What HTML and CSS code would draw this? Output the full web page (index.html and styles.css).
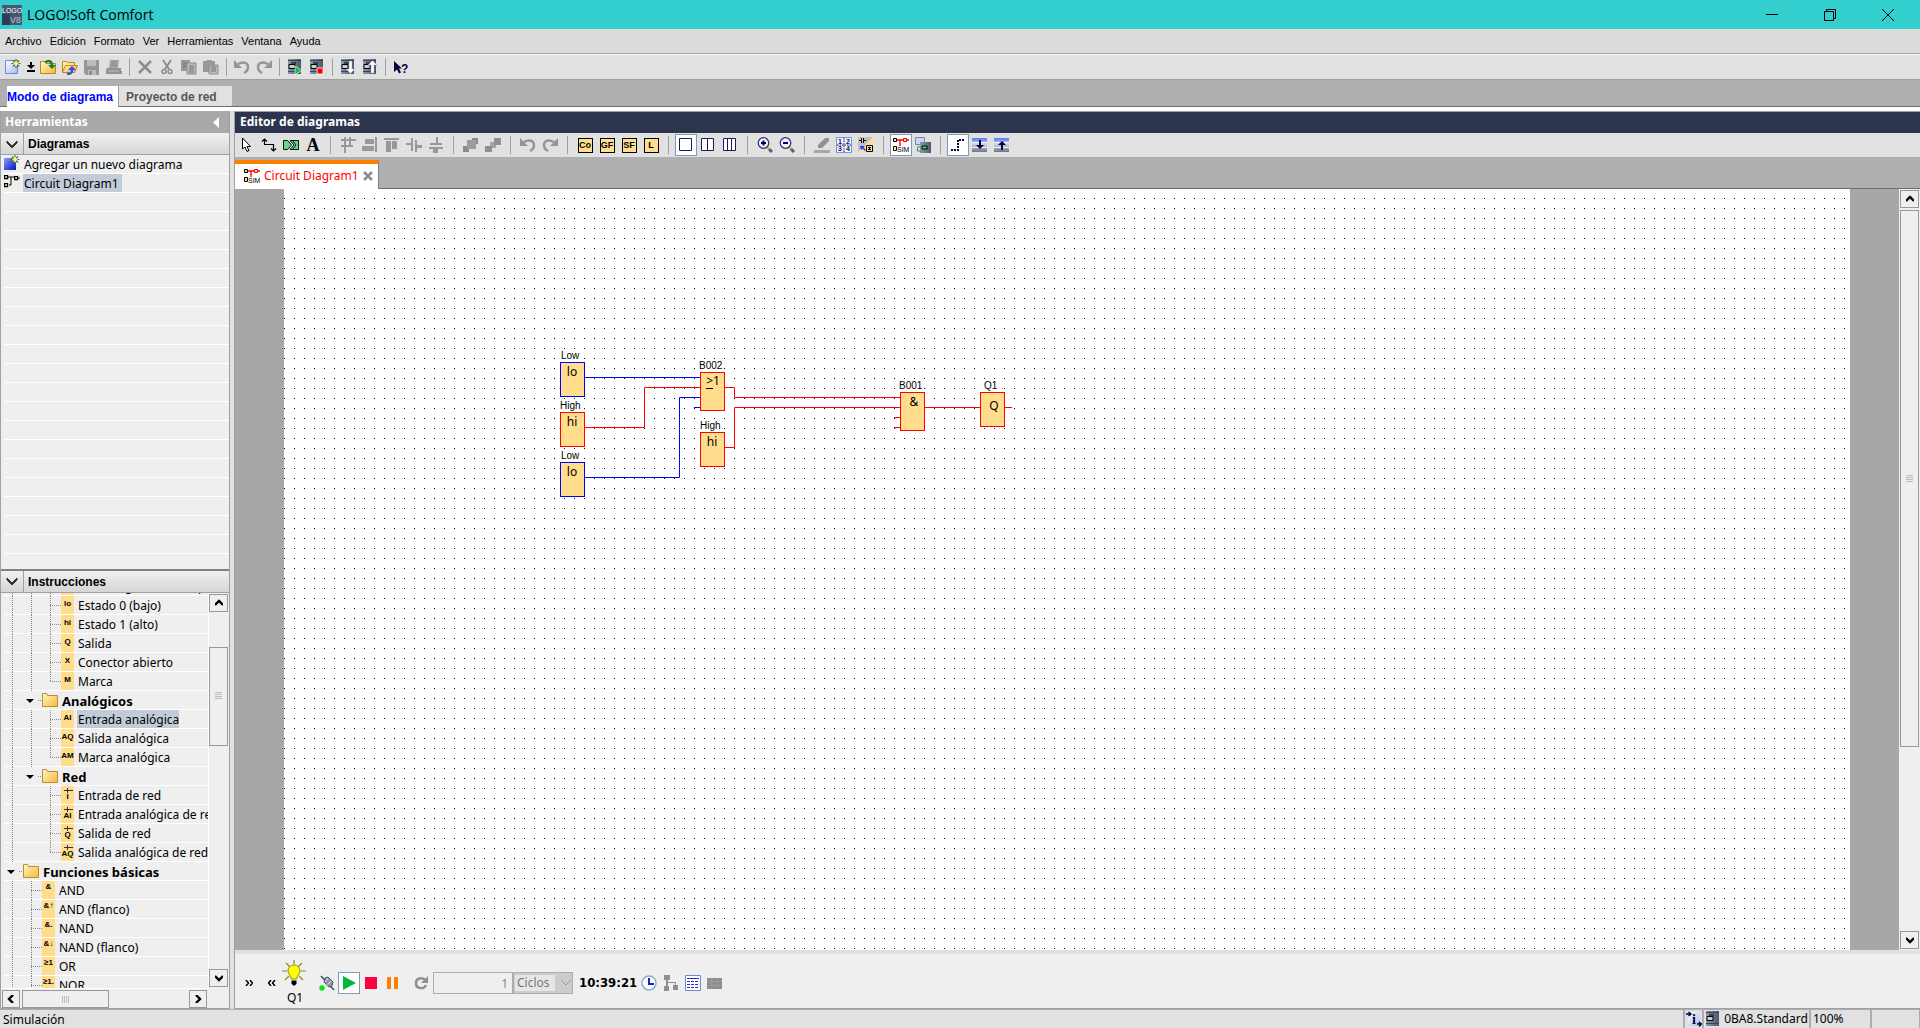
FILE: index.html
```html
<!DOCTYPE html>
<html lang="es">
<head>
<meta charset="utf-8">
<title>LOGO!Soft Comfort</title>
<link rel="stylesheet" href="styles.css">
</head>
<body>
<svg class="sprite" aria-hidden="true">
  <defs>
    <linearGradient id="g-blue" x1="0" y1="0" x2="1" y2="1"><stop offset="0" stop-color="#8a9cff"/><stop offset="1" stop-color="#0a14b8"/></linearGradient>
    <linearGradient id="g-page" x1="0" y1="0" x2="1" y2="1"><stop offset="0" stop-color="#fff"/><stop offset="1" stop-color="#a9b8f0"/></linearGradient>
    <linearGradient id="g-folder" x1="0" y1="0" x2="1" y2="1"><stop offset="0" stop-color="#fff6cc"/><stop offset="1" stop-color="#f5b93a"/></linearGradient>
    <linearGradient id="g-module" x1="0" y1="0" x2="1" y2="0"><stop offset="0" stop-color="#8d99ae"/><stop offset="1" stop-color="#4d586c"/></linearGradient>
    <linearGradient id="g-bar" x1="0" y1="0" x2="0" y2="1"><stop offset="0" stop-color="#5a78f0"/><stop offset=".35" stop-color="#a9bdff"/><stop offset=".4" stop-color="#d5d8e2"/><stop offset="1" stop-color="#6f7686"/></linearGradient>
  </defs>
  <symbol id="i-spark" viewBox="0 0 16 16"><path d="M11 0v9M6.500 4.500h9M8 1.500l6 6M14 1.500l-6 6" stroke="#2f6a78" stroke-width="1.200"/><path d="M11 2v5M8.500 4.500h5" stroke="#ffff3c" stroke-width="2"/></symbol>
  <symbol id="i-new" viewBox="0 0 16 16"><path d="M.5 1.500h12v13H.5z" fill="url(#g-page)" stroke="#6f86d8"/><use href="#i-spark"/></symbol>
  <symbol id="i-newdia" viewBox="0 0 16 16"><path d="M0 3h12v12H0z" fill="url(#g-blue)"/><use href="#i-spark"/></symbol>
  <symbol id="i-drop" viewBox="0 0 8 12"><path d="M3 1h2v3h3L4 8 0 4h3zM0 9h8v2H0z" fill="#000"/></symbol>
  <symbol id="i-open" viewBox="0 0 16 16"><path d="M.5 2.500h5l1 2h9v10H.5z" fill="url(#g-folder)" stroke="#c08a10"/><path d="M5 3.500c4-3 7-1 7 3" stroke="#18803a" stroke-width="2.500" fill="none"/><path d="M8 6h8l-4 4z" fill="#18803a"/></symbol>
  <symbol id="i-openup" viewBox="0 0 16 16"><path d="M.5 2.500h4l1 1h7v3h3l-3 7H.5z" fill="url(#g-folder)" stroke="#c08a10"/><path d="M.5 13l3-6.500h12" fill="none" stroke="#c08a10"/><path d="M5 15c4 0 5-1 5-4" stroke="#2d50f0" stroke-width="2.500" fill="none"/><path d="M6 11l4-4 4 4z" fill="#2d50f0"/></symbol>
  <symbol id="i-save" viewBox="0 0 16 16"><path d="M0 1h15v15H2l-2-2z" fill="#969696"/><path d="M3 1h9v6H3zM4 11h8v5H4z" fill="#bdbdbd"/><path d="M5 12h3v4H5z" fill="#8d8d8d"/></symbol>
  <symbol id="i-print" viewBox="0 0 16 16"><path d="M4 1h9l-1 8H3z" fill="#a6a6a6"/><path d="M5 3h6M5 5h6M5 7h6" stroke="#8b8b8b"/><path d="M1 9h14v3h1v3H0v-4z" fill="#929292"/><path d="M2 12h11" stroke="#bbb"/></symbol>
  <symbol id="i-delete" viewBox="0 0 16 16"><path d="M2 2l12 12M14 2L2 14" stroke="#8d8d8d" stroke-width="2.500"/></symbol>
  <symbol id="i-cut" viewBox="0 0 16 16"><path d="M4 1l6 9M12 1L6 10" stroke="#8d8d8d" stroke-width="2"/><circle cx="5" cy="12.500" r="2" fill="none" stroke="#8d8d8d" stroke-width="1.500"/><circle cx="11" cy="12.500" r="2" fill="none" stroke="#8d8d8d" stroke-width="1.500"/></symbol>
  <symbol id="i-copy" viewBox="0 0 16 16"><path d="M0 1h9v11H0z" fill="#999"/><path d="M6 4h9v11H6z" fill="#b9b9b9" stroke="#8d8d8d"/><path d="M2 4h4M2 6h3M2 8h3M8 7h5M8 9h5M8 11h5M8 13h5" stroke="#777"/></symbol>
  <symbol id="i-paste" viewBox="0 0 16 16"><path d="M0 2h3l1-1h4l1 1h3v11H0z" fill="#999"/><path d="M6 6h9v9H6z" fill="#b9b9b9" stroke="#8d8d8d"/><path d="M8 8h5M8 10h5M8 12h5" stroke="#777"/></symbol>
  <symbol id="i-undo" viewBox="0 0 16 16"><path d="M4 5c6-3 10-1 10 3 0 3-2 5-4 6" fill="none" stroke="#959595" stroke-width="2.500"/><path d="M0 1v8h8z" fill="#959595"/></symbol>
  <symbol id="i-redo" viewBox="0 0 16 16"><path d="M12 5C6 2 2 4 2 8c0 3 2 5 4 6" fill="none" stroke="#959595" stroke-width="2.500"/><path d="M16 1v8H8z" fill="#959595"/></symbol>
  <symbol id="i-module" viewBox="0 0 16 16"><path d="M1 0h13v15H1z" fill="url(#g-module)"/><path d="M1 1h13v1H1zM1 12h13v1H1z" fill="#39435a"/><path d="M2 5.500h6v4H2zM4 4h5" fill="#c7cfde" stroke="#000"/></symbol>
  <symbol id="i-start" viewBox="0 0 16 16"><use href="#i-module"/><path d="M8 7l7 4.500-7 4z" fill="#11c04a" stroke="#fff" stroke-width=".6"/></symbol>
  <symbol id="i-halt" viewBox="0 0 16 16"><use href="#i-module"/><path d="M8 9h6v6H8z" fill="#f00" stroke="#fff" stroke-width=".8"/></symbol>
  <symbol id="i-down" viewBox="0 0 16 16"><use href="#i-module"/><path d="M9 2h3v8h3l-4.500 4.500L6 10h3z" fill="#fff" stroke="#8490a8" stroke-width=".4"/></symbol>
  <symbol id="i-up" viewBox="0 0 16 16"><use href="#i-module"/><path d="M9 14h3V6h3l-4.500-4.500L6 6h3z" fill="#fff" stroke="#8490a8" stroke-width=".4"/></symbol>
  <symbol id="i-help" viewBox="0 0 16 16"><path d="M1 2v11l3-2.500 2 4 2-1-2-4h3z" fill="#06063c"/><text x="8" y="14" font-family="Liberation Sans, sans-serif" font-size="12" font-weight="700" fill="#06063c">?</text></symbol>
  <symbol id="i-circuit" viewBox="0 0 16 16"><path d="M4 3h6M7 3v8M5 11h2M14 4h2" stroke="#000" fill="none"/><path d="M.6 1.600h3v3h-3zM10.600 2.600h3v3h-3zM.6 9.600h3v3h-3z" fill="#ffe08a" stroke="#000" stroke-width="1.200"/></symbol>
  <symbol id="i-arrow" viewBox="0 0 16 16"><path d="M3.500 1v11l2.500-2 2 4.500 2-1-2-4h3.500z" fill="#fff" stroke="#000"/></symbol>
  <symbol id="i-link" viewBox="0 0 16 16"><path d="M3.500 2v5.500h9V14M1 4.500L3.500 2 6 4.500M10 11.500l2.500 2.500 2.500-2.500" fill="none" stroke="#000" stroke-width="1.200"/></symbol>
  <symbol id="i-cutlink" viewBox="0 0 16 16"><path d="M.5 3.500h4L8.500 8l-4 4.500h-4zM7 3.500h8.500v9H7L11 8z" fill="#5edc8a" stroke="#111"/><path d="M9.500 3.500L13 8l-3.500 4.500" fill="none" stroke="#111"/></symbol>
  <symbol id="i-align1" viewBox="0 0 16 16"><path d="M5 0v16M10 0v9M1 3h15M1 9h12" stroke="#999" stroke-width="2"/></symbol>
  <symbol id="i-align2" viewBox="0 0 16 16"><path d="M3 2h9v5H3zM0 9h12v5H0zM13 0h2v15h-2z" fill="#999"/></symbol>
  <symbol id="i-align3" viewBox="0 0 16 16"><path d="M0 1h15v2H0zM2 4h5v11H2zM8 4h5v8H8z" fill="#999"/></symbol>
  <symbol id="i-align4" viewBox="0 0 16 16"><path d="M0 6h5v2H0zM5 1h2v13H5zM9 3h2v12H9zM11 8h5v3h-5z" fill="#999"/></symbol>
  <symbol id="i-align5" viewBox="0 0 16 16"><path d="M8 0h2v6H8zM2 6h12v2H2zM1 10h14v2H1zM5 12h5v4H5z" fill="#999"/></symbol>
  <symbol id="i-stack1" viewBox="0 0 16 16"><path d="M0 9h6v6H0z" fill="#8b8b8b"/><path d="M9 1h6v6H9z" fill="#8b8b8b"/><path d="M4 3h9v9H4z" fill="#9b9b9b"/></symbol>
  <symbol id="i-stack2" viewBox="0 0 16 16"><path d="M5 5h6v6H5z" fill="#a5a5a5"/><path d="M9 1h7v7H9zM0 9h7v6H0z" fill="#8f8f8f"/></symbol>
  <symbol id="i-pane1" viewBox="0 0 16 16"><path d="M1.500 1.500h12v12h-12z" fill="#fff" stroke="#1c1c5c"/></symbol>
  <symbol id="i-pane2" viewBox="0 0 16 16"><path d="M1.500 1.500h12v12h-12zM7.500 1v13" fill="#fff" stroke="#1c1c5c"/></symbol>
  <symbol id="i-pane3" viewBox="0 0 16 16"><path d="M1.500 1.500h12v12h-12zM5.500 1v13M9.500 1v13" fill="#fff" stroke="#1c1c5c"/></symbol>
  <symbol id="i-lens" viewBox="0 0 16 16"><path d="M10 10l2 2" stroke="#e8b53a" stroke-width="3"/><path d="M12 12l3 3" stroke="#55627e" stroke-width="3"/><circle cx="6.500" cy="6" r="5.300" fill="#eef2ff" stroke="#2b2f6c" stroke-width="1.200"/><path d="M4 6h5" stroke="#000060" stroke-width="2"/></symbol>
  <symbol id="i-zoomin" viewBox="0 0 16 16"><use href="#i-lens"/><path d="M6.500 3.500v5" stroke="#000060" stroke-width="2"/></symbol>
  <symbol id="i-erase" viewBox="0 0 16 16"><path d="M0 13h16v3H0z" fill="#a8a8a8"/><path d="M11 1h4v3l-7 7H4V8z" fill="#929292"/></symbol>
  <symbol id="i-num" viewBox="0 0 16 16"><path d="M.5.500h15v15H.5z" fill="#f3f6ff" stroke="#7c92e0"/><path d="M8 1v14M1 8h14" stroke="#101060" stroke-dasharray="1.500 1"/><g font-family="Liberation Sans, sans-serif" font-size="7" font-weight="700" fill="#101060"><text x="2" y="7">1</text><text x="10" y="7">2</text><text x="2" y="14">3</text><text x="10" y="14">4</text></g></symbol>
  <symbol id="i-convert" viewBox="0 0 16 16"><path d="M0 0h15v15H0z" fill="#bfc0c2"/><path d="M15 0v15H0z" fill="#ffdca0"/><path d="M1 3.500h2M3.500 1v5M5.500 1v5M6 3.500h2" stroke="#000"/><path d="M2 9h5L5.500 10.500 8 13l-1 1-2.500-2.500L3 13z" fill="#1b3bff"/><path d="M8.500 8.500h6v6h-6z" fill="#ffe0a0" stroke="#000"/><path d="M10 10.500h3M11.500 10.500v2M10 12.500h3" stroke="#000"/></symbol>
  <symbol id="i-sim" viewBox="0 0 16 16"><path d="M4 3h6M7 3v6M14 3h2" stroke="#f00" stroke-width="1.400"/><path d="M.5 1.500h3v3h-3zM.5 9.500h3v4h-3z" fill="#ffe08a" stroke="#000"/><path d="M10.500 1.500h3v3h-3z" fill="#ffe08a" stroke="#f00"/><text x="4" y="15" font-family="Liberation Sans, sans-serif" font-size="7">SIM</text></symbol>
  <symbol id="i-online" viewBox="0 0 16 16"><path d="M.5.500h9v7h-9z" fill="#c9d6f4" stroke="#7a88a8"/><path d="M2 9h5v2H2z" fill="#98a2b8"/><path d="M5 5h11v11H5z" fill="url(#g-module)"/><path d="M7 9h5v3H7z" fill="#29e060" stroke="#000"/><path d="M2.500 11v3H6" stroke="#15a040" fill="none"/></symbol>
  <symbol id="i-snap" viewBox="0 0 16 16"><path d="M1 13h7V3h7" stroke="#06063c" stroke-width="2" stroke-dasharray="2 1" fill="none"/></symbol>
  <symbol id="i-bardown" viewBox="0 0 16 16"><path d="M0 1h15v14H0z" fill="url(#g-bar)"/><path d="M0 5.500h15M0 10.500h15" stroke="#f3f5fa"/><path d="M8 3v6" stroke="#06063c" stroke-width="2"/><path d="M4 8h8l-4 4z" fill="#06063c"/></symbol>
  <symbol id="i-barup" viewBox="0 0 16 16"><path d="M0 1h15v14H0z" fill="url(#g-bar)"/><path d="M0 5.500h15M0 10.500h15" stroke="#f3f5fa"/><path d="M8 13V7" stroke="#06063c" stroke-width="2"/><path d="M4 8h8L8 4z" fill="#06063c"/></symbol>
  <symbol id="i-folder" viewBox="0 0 16 16"><path d="M.5 1.500h4l1 2h10v11H.5z" fill="url(#g-folder)" stroke="#b8902c"/></symbol>
  <symbol id="i-plug" viewBox="0 0 16 16"><path d="M2 1l13 14" stroke="#44546c" stroke-width="1.500"/><path d="M6 3l3-1 5 5-1 4-3 1-5-5z" fill="#8b98ae" stroke="#44546c"/><path d="M9 3l-3 4M12 6l-4 4" stroke="#fff" stroke-width=".7"/><circle cx="3" cy="13" r="2.700" fill="#00e818"/></symbol>
  <symbol id="i-play" viewBox="0 0 16 16"><path d="M2 1l13 7-13 7z" fill="#00b83c"/></symbol>
  <symbol id="i-stop" viewBox="0 0 16 16"><path d="M2 2h12v12H2z" fill="#ff0040"/></symbol>
  <symbol id="i-pause" viewBox="0 0 16 16"><path d="M2 2h4v12H2zM9 2h4v12H9z" fill="#ff8000"/></symbol>
  <symbol id="i-refresh" viewBox="0 0 16 16"><path d="M13 10c-1 4-10 5-10-2 0-5 6-6 9-3" fill="none" stroke="#8f8f8f" stroke-width="2.500"/><path d="M15 1v7H8z" fill="#8f8f8f"/></symbol>
  <symbol id="i-clock" viewBox="0 0 16 16"><circle cx="8" cy="8" r="7" fill="#fff" stroke="#8fa9d4" stroke-width="1.500"/><path d="M8 3v6h5" stroke="#1020d0" stroke-width="2" fill="none"/></symbol>
  <symbol id="i-net" viewBox="0 0 16 16"><path d="M1 0h6v5H1zM1 11h5v5H1zM10 10h5v5h-5zM3 5h2v6H3zM5 7h8v1H5zM12 7h1v3h-1z" fill="#8f8f8f"/></symbol>
  <symbol id="i-table" viewBox="0 0 16 16"><path d="M.5.500h15v15H.5z" fill="#fff" stroke="#6d8cc8"/><path d="M2 3.500h12" stroke="#1a30d0"/><path d="M2 6.500h12M2 9.500h12M2 12.500h12" stroke="#1a30d0" stroke-dasharray="3 1"/></symbol>
  <symbol id="i-grid" viewBox="0 0 16 16"><path d="M0 3h15v11H0z" fill="#8f8f8f"/><path d="M0 6.500h15M0 10.500h15M4.500 3v11M10.500 3v11" stroke="#9f9f9f" stroke-width=".7"/></symbol>
  <symbol id="i-bulb" viewBox="0 0 24 26"><path d="M12 0v4M4 3l4 4M20 3l-4 4M0 11h5M19 11h5M3 20l4-4M21 20l-4-4" stroke="#8a8a20" stroke-width="1.200"/><path d="M12 5c-4 0-6 3-6 6s3 4 3.500 8h5c.5-4 3.500-5 3.500-8s-2-6-6-6z" fill="#ff0" stroke="#8a8a20"/><path d="M9.500 20.500h5v3l-1.500 2h-2l-1.500-2z" fill="#000"/></symbol>
  <symbol id="i-info" viewBox="0 0 16 16"><path d="M2 1h10l2 2v12H2z" fill="url(#g-page)"/><path d="M0 3h4M2.500 1L5 3 2.500 5M11 13h4M13 11l2.500 2L13 15.500" stroke="#06063c" stroke-width="1.500" fill="none"/><text x="6" y="13" font-family="Liberation Serif, serif" font-size="14" font-weight="700" fill="#06063c">i</text></symbol>
  <symbol id="i-chev" viewBox="0 0 12 8"><path d="M1 1l5 5 5-5v2L6 8 1 3z" fill="#333" stroke="#333"/></symbol>
  <symbol id="i-sup" viewBox="0 0 8 8"><path d="M0 6l4-4 4 4" stroke="#000" stroke-width="2.400" fill="none"/></symbol>
  <symbol id="i-sdown" viewBox="0 0 8 8"><path d="M0 2l4 4 4-4" stroke="#000" stroke-width="2.400" fill="none"/></symbol>
  <symbol id="i-sleft" viewBox="0 0 8 8"><path d="M6 0L2 4l4 4" stroke="#000" stroke-width="2.400" fill="none"/></symbol>
  <symbol id="i-sright" viewBox="0 0 8 8"><path d="M2 0l4 4-4 4" stroke="#000" stroke-width="2.400" fill="none"/></symbol>
</svg>

<header class="titlebar">
  <svg class="app-icon" viewBox="0 0 20 20"><path d="M0 0h20v20H0z" fill="#46586e"/><path d="M0 9h8v11H0z" fill="#2d3c50"/><g font-family="Liberation Sans, sans-serif" fill="#fff"><text x="0" y="8" font-size="7">LOGO</text><text x="8" y="18" font-size="9" fill="#b9c3d0">V8</text></g></svg>
  <h1 class="app-title">LOGO!Soft Comfort</h1>
  <button class="win-btn" aria-label="Minimizar"><svg viewBox="0 0 12 12"><path d="M0 5.500h12" stroke="#000"/></svg></button>
  <button class="win-btn" aria-label="Restaurar"><svg viewBox="0 0 12 12"><path d="M.5 2.500h9v9h-9zM2.500 2.500v-2h9v9h-2" fill="none" stroke="#000"/></svg></button>
  <button class="win-btn" aria-label="Cerrar"><svg viewBox="0 0 12 12"><path d="M0 0l12 12M12 0L0 12" stroke="#000"/></svg></button>
</header>

<nav class="menubar" aria-label="Menú">
  <button>Archivo</button><button>Edición</button><button>Formato</button><button>Ver</button><button>Herramientas</button><button>Ventana</button><button>Ayuda</button>
</nav>

<div class="toolbar main-tools" role="toolbar" aria-label="Estándar">
  <button class="tool" aria-label="Nuevo"><svg><use href="#i-new"/></svg></button>
  <button class="tool narrow" aria-label="Elegir tipo"><svg><use href="#i-drop"/></svg></button>
  <button class="tool" aria-label="Abrir"><svg><use href="#i-open"/></svg></button>
  <button class="tool" aria-label="Cerrar archivo"><svg><use href="#i-openup"/></svg></button>
  <button class="tool" aria-label="Guardar"><svg><use href="#i-save"/></svg></button>
  <button class="tool" aria-label="Imprimir"><svg><use href="#i-print"/></svg></button>
  <span class="sep"></span>
  <button class="tool" aria-label="Borrar"><svg><use href="#i-delete"/></svg></button>
  <button class="tool" aria-label="Cortar"><svg><use href="#i-cut"/></svg></button>
  <button class="tool" aria-label="Copiar"><svg><use href="#i-copy"/></svg></button>
  <button class="tool" aria-label="Pegar"><svg><use href="#i-paste"/></svg></button>
  <span class="sep"></span>
  <button class="tool" aria-label="Deshacer"><svg><use href="#i-undo"/></svg></button>
  <button class="tool" aria-label="Rehacer"><svg><use href="#i-redo"/></svg></button>
  <span class="sep"></span>
  <button class="tool" aria-label="Iniciar LOGO!"><svg><use href="#i-start"/></svg></button>
  <button class="tool" aria-label="Detener LOGO!"><svg><use href="#i-halt"/></svg></button>
  <span class="sep"></span>
  <button class="tool" aria-label="PC a LOGO!"><svg><use href="#i-down"/></svg></button>
  <button class="tool" aria-label="LOGO! a PC"><svg><use href="#i-up"/></svg></button>
  <span class="sep"></span>
  <button class="tool" aria-label="Ayuda contextual"><svg><use href="#i-help"/></svg></button>
</div>

<div class="modes" role="tablist">
  <button class="mode active" role="tab" aria-selected="true">Modo de diagrama</button>
  <button class="mode" role="tab" aria-selected="false">Proyecto de red</button>
</div>

<div class="workspace">
  <aside class="sidebar">
    <div class="side-title"><h2>Herramientas</h2><button aria-label="Ocultar"><svg viewBox="0 0 6 11"><path d="M6 0v11L0 5.500z" fill="#fff"/></svg></button></div>
    <div class="section-head"><button aria-label="Contraer diagramas"><svg><use href="#i-chev"/></svg></button><h3>Diagramas</h3></div>
    <ul class="diagrams">
      <li><svg><use href="#i-newdia"/></svg><span>Agregar un nuevo diagrama</span></li>
      <li><svg><use href="#i-circuit"/></svg><span class="picked">Circuit Diagram1</span></li>
    </ul>
    <div class="section-head second"><button aria-label="Contraer instrucciones"><svg><use href="#i-chev"/></svg></button><h3>Instrucciones</h3></div>
    <div class="tree-pane">
      <div class="tree-view">
        <ul class="tree">
          <li><i class="guide"></i><i class="guide"></i><i class="guide tee"></i><b class="chip"></b><span>Bit de registro de desplazamiento</span></li>
          <li><i class="guide"></i><i class="guide"></i><i class="guide tee"></i><b class="chip">lo</b><span>Estado 0 (bajo)</span></li>
          <li><i class="guide"></i><i class="guide"></i><i class="guide tee"></i><b class="chip">hi</b><span>Estado 1 (alto)</span></li>
          <li><i class="guide"></i><i class="guide"></i><i class="guide tee"></i><b class="chip">Q</b><span>Salida</span></li>
          <li><i class="guide"></i><i class="guide"></i><i class="guide tee"></i><b class="chip">X</b><span>Conector abierto</span></li>
          <li><i class="guide"></i><i class="guide"></i><i class="guide tee last"></i><b class="chip">M</b><span>Marca</span></li>
          <li class="group"><i class="guide"></i><i class="twist"></i><svg><use href="#i-folder"/></svg><span>Analógicos</span></li>
          <li><i class="guide"></i><i class="guide"></i><i class="guide tee"></i><b class="chip">AI</b><span class="picked">Entrada analógica</span></li>
          <li><i class="guide"></i><i class="guide"></i><i class="guide tee"></i><b class="chip">AQ</b><span>Salida analógica</span></li>
          <li><i class="guide"></i><i class="guide"></i><i class="guide tee last"></i><b class="chip">AM</b><span>Marca analógica</span></li>
          <li class="group"><i class="guide"></i><i class="twist"></i><svg><use href="#i-folder"/></svg><span>Red</span></li>
          <li><i class="guide"></i><i class="blank"></i><i class="guide tee"></i><b class="chip net">I</b><span>Entrada de red</span></li>
          <li><i class="guide"></i><i class="blank"></i><i class="guide tee"></i><b class="chip net">AI</b><span>Entrada analógica de red</span></li>
          <li><i class="guide"></i><i class="blank"></i><i class="guide tee"></i><b class="chip net">Q</b><span>Salida de red</span></li>
          <li><i class="guide"></i><i class="blank"></i><i class="guide tee last"></i><b class="chip net">AQ</b><span>Salida analógica de red</span></li>
          <li class="group"><i class="twist"></i><svg><use href="#i-folder"/></svg><span>Funciones básicas</span></li>
          <li><i class="guide"></i><i class="guide tee"></i><b class="chip fn">&amp;</b><span>AND</span></li>
          <li><i class="guide"></i><i class="guide tee"></i><b class="chip fn">&amp;↑</b><span>AND (flanco)</span></li>
          <li><i class="guide"></i><i class="guide tee"></i><b class="chip fn">&amp;.</b><span>NAND</span></li>
          <li><i class="guide"></i><i class="guide tee"></i><b class="chip fn">&amp;↓</b><span>NAND (flanco)</span></li>
          <li><i class="guide"></i><i class="guide tee"></i><b class="chip fn">≥1</b><span>OR</span></li>
          <li><i class="guide"></i><i class="guide tee"></i><b class="chip fn">≥1.</b><span>NOR</span></li>
        </ul>
      </div>
      <div class="vscroll">
        <button aria-label="Subir"><svg><use href="#i-sup"/></svg></button>
        <div class="track tree-track"><div class="thumb"></div></div>
        <button aria-label="Bajar"><svg><use href="#i-sdown"/></svg></button>
      </div>
      <div class="hscroll">
        <button aria-label="Izquierda"><svg><use href="#i-sleft"/></svg></button>
        <div class="track"><div class="thumb"></div></div>
        <button aria-label="Derecha"><svg><use href="#i-sright"/></svg></button>
      </div>
    </div>
  </aside>

  <main class="editor">
    <h2 class="editor-title">Editor de diagramas</h2>
    <div class="toolbar editor-tools" role="toolbar" aria-label="Edición">
      <button class="tool" aria-label="Selección"><svg><use href="#i-arrow"/></svg></button>
      <button class="tool" aria-label="Conector"><svg><use href="#i-link"/></svg></button>
      <button class="tool" aria-label="Cortar conexión"><svg><use href="#i-cutlink"/></svg></button>
      <button class="tool letter" aria-label="Texto">A</button>
      <span class="sep"></span>
      <button class="tool" aria-label="Alinear auto"><svg><use href="#i-align1"/></svg></button>
      <button class="tool" aria-label="Alinear derecha"><svg><use href="#i-align2"/></svg></button>
      <button class="tool" aria-label="Alinear arriba"><svg><use href="#i-align3"/></svg></button>
      <button class="tool" aria-label="Distribuir horizontal"><svg><use href="#i-align4"/></svg></button>
      <button class="tool" aria-label="Distribuir vertical"><svg><use href="#i-align5"/></svg></button>
      <span class="sep"></span>
      <button class="tool" aria-label="Al frente"><svg><use href="#i-stack1"/></svg></button>
      <button class="tool" aria-label="Al fondo"><svg><use href="#i-stack2"/></svg></button>
      <span class="sep"></span>
      <button class="tool" aria-label="Deshacer edición"><svg><use href="#i-undo"/></svg></button>
      <button class="tool" aria-label="Rehacer edición"><svg><use href="#i-redo"/></svg></button>
      <span class="sep"></span>
      <button class="tool"><span class="key">Co</span></button>
      <button class="tool"><span class="key">GF</span></button>
      <button class="tool"><span class="key">SF</span></button>
      <button class="tool"><span class="key">L</span></button>
      <span class="sep"></span>
      <button class="tool on" aria-label="Una ventana"><svg><use href="#i-pane1"/></svg></button>
      <button class="tool" aria-label="Dos ventanas"><svg><use href="#i-pane2"/></svg></button>
      <button class="tool" aria-label="Tres ventanas"><svg><use href="#i-pane3"/></svg></button>
      <span class="sep"></span>
      <button class="tool" aria-label="Ampliar"><svg><use href="#i-zoomin"/></svg></button>
      <button class="tool" aria-label="Reducir"><svg><use href="#i-lens"/></svg></button>
      <span class="sep"></span>
      <button class="tool" aria-label="Borrar marcas"><svg><use href="#i-erase"/></svg></button>
      <button class="tool" aria-label="Páginas"><svg><use href="#i-num"/></svg></button>
      <button class="tool" aria-label="Convertir"><svg><use href="#i-convert"/></svg></button>
      <span class="sep"></span>
      <button class="tool on" aria-label="Simulación"><svg><use href="#i-sim"/></svg></button>
      <button class="tool" aria-label="Test online"><svg><use href="#i-online"/></svg></button>
      <span class="sep"></span>
      <button class="tool on" aria-label="Líneas de referencia"><svg><use href="#i-snap"/></svg></button>
      <button class="tool" aria-label="Expandir"><svg><use href="#i-bardown"/></svg></button>
      <button class="tool" aria-label="Contraer"><svg><use href="#i-barup"/></svg></button>
    </div>

    <div class="doc-tabs">
      <div class="doc-tab"><svg><use href="#i-sim"/></svg><span>Circuit Diagram1</span><button aria-label="Cerrar diagrama"><svg viewBox="0 0 10 10"><path d="M1 1l8 8M9 1L1 9" stroke="#8c8c8c" stroke-width="2.500"/></svg></button></div>
    </div>

    <div class="stage">
      <div class="paper">
        <svg class="diagram" aria-label="Diagrama de circuito">
          <g class="plate"><rect x="276" y="160" width="24" height="12"/><rect x="276" y="210" width="24" height="12"/><rect x="276" y="260" width="24" height="12"/><rect x="414" y="170" width="26" height="12"/><rect x="414" y="230" width="26" height="12"/><rect x="614" y="190" width="26" height="12"/><rect x="694" y="190" width="24" height="12"/></g>
          <g class="low"><path d="M300 188.500H416"/><path d="M300 288.500H395.500V208.500H416"/><path d="M410 218.500H416"/></g>
          <g class="high"><path d="M300 238.500H360.500V198.500H416"/><path d="M440 198.500H450.500V208.500H616"/><path d="M440 258.500H450.500V218.500H616"/><path d="M610 228.500H616M610 238.500H616M640 218.500H696M720 218.500H728"/></g>
          <g class="low block"><rect x="276.500" y="173.500" width="24" height="34"/><rect x="276.500" y="273.500" width="24" height="34"/></g>
          <g class="high block"><rect x="276.500" y="223.500" width="24" height="34"/><rect x="416.500" y="183.500" width="24" height="38"/><rect x="416.500" y="243.500" width="24" height="34"/><rect x="616.500" y="203.500" width="24" height="38"/><rect x="696.500" y="203.500" width="24" height="34"/></g>
          <g class="tag"><text x="277" y="170">Low</text><text x="276" y="220">High</text><text x="277" y="270">Low</text><text x="415" y="180">B002</text><text x="416" y="240">High</text><text x="615" y="200">B001</text><text x="700" y="200">Q1</text></g>
          <g class="sym"><text x="288" y="187">lo</text><text x="288" y="237">hi</text><text x="288" y="287">lo</text><text x="428" y="257">hi</text><text x="429" y="196">&gt;1</text><text x="630" y="217">&amp;</text><text x="710" y="221">Q</text></g>
          <path class="rule" d="M422 199.500H429"/>
        </svg>
      </div>
      <div class="vscroll">
        <button aria-label="Subir diagrama"><svg><use href="#i-sup"/></svg></button>
        <div class="track stage-track"><div class="thumb"></div></div>
        <button aria-label="Bajar diagrama"><svg><use href="#i-sdown"/></svg></button>
      </div>
    </div>

    <div class="sim">
      <button class="fold" aria-label="Expandir todo"><svg viewBox="0 0 8 6"><path d="M1 0l2.500 3L1 6M5 0l2.500 3L5 6" stroke="#000" stroke-width="1.500" fill="none"/></svg></button>
      <button class="fold" aria-label="Contraer todo"><svg viewBox="0 0 8 6"><path d="M3 0L.5 3 3 6M7 0L4.500 3 7 6" stroke="#000" stroke-width="1.500" fill="none"/></svg></button>
      <div class="lamp"><svg><use href="#i-bulb"/></svg><span>Q1</span></div>
      <button class="tool" aria-label="Alimentación"><svg><use href="#i-plug"/></svg></button>
      <button class="tool on" aria-label="Iniciar"><svg><use href="#i-play"/></svg></button>
      <button class="tool" aria-label="Parar"><svg><use href="#i-stop"/></svg></button>
      <button class="tool" aria-label="Pausa"><svg><use href="#i-pause"/></svg></button>
      <button class="tool cycle" aria-label="Ejecutar ciclos"><svg><use href="#i-refresh"/></svg></button>
      <input class="count" type="text" value="1" aria-label="Número de ciclos" disabled>
      <div class="unit"><select aria-label="Unidad" disabled><option>Ciclos</option></select><svg viewBox="0 0 10 6"><path d="M0 0l5 5 5-5" stroke="#999" fill="none"/></svg></div>
      <time class="time">10:39:21</time>
      <button class="tool" aria-label="Hora"><svg><use href="#i-clock"/></svg></button>
      <button class="tool" aria-label="Red"><svg><use href="#i-net"/></svg></button>
      <button class="tool" aria-label="Tabla"><svg><use href="#i-table"/></svg></button>
      <button class="tool" aria-label="TD"><svg><use href="#i-grid"/></svg></button>
    </div>
  </main>
</div>

<footer class="status">
  <span class="message">Simulación</span>
  <span class="cell"><svg><use href="#i-info"/></svg></span>
  <span class="cell model"><svg><use href="#i-module"/></svg>0BA8.Standard</span>
  <span class="cell zoom">100%</span>
  <span class="cell spare"></span>
</footer>
</body>
</html>
```
FILE: styles.css
```css
:root {
  --ui: "Noto Sans", sans-serif;
  --arial: "Liberation Sans", Arial, sans-serif;
  --face: #e1e1e1;
  --panel: #efefef;
  --line: #a0a0a0;
  --pick: #c1ccd8;
}
* { box-sizing: border-box; }
body {
  margin: 0;
  height: 100vh;
  display: flex;
  flex-direction: column;
  overflow: hidden;
  font: 12px/18px var(--ui);
  color: #000;
  background: var(--face);
}
button { border: 0; padding: 0; margin: 0; background: none; color: inherit; font: inherit; white-space: nowrap; }
h1, h2, h3, ul { margin: 0; padding: 0; font: inherit; list-style: none; }
svg { display: block; width: 16px; height: 16px; flex: none; }
.sprite { position: absolute; width: 0; height: 0; }

.titlebar { display: flex; align-items: center; height: 29px; padding: 0 3px 0 2px; background: #33cece; flex: none; }
.app-icon { width: 20px; height: 20px; }
.app-title { flex: 1; padding-left: 5px; font: 14px/22px "Open Sans", sans-serif; }
.win-btn { width: 58px; height: 28px; display: flex; align-items: center; justify-content: center; }
.win-btn svg { width: 12px; height: 12px; }

.menubar { display: flex; gap: 8px; height: 25px; padding-left: 5px; background: #dcdcdc; border-bottom: 1px solid var(--line); font: 11px/24px var(--arial); flex: none; }

.toolbar { display: flex; align-items: center; background: var(--face); flex: none; }
.tool { width: 22px; height: 22px; display: flex; align-items: center; justify-content: center; flex: none; }
.tool.on { background: #fff; border: 1px solid #7f9db9; }
.narrow { width: 13px; }
.narrow svg { width: 8px; height: 12px; }
.sep { height: 18px; border-left: 1px solid var(--line); flex: none; }
.main-tools { height: 26px; padding-left: 2px; border-top: 1px solid #fff; border-bottom: 1px solid var(--line); }
.main-tools .sep { width: 5px; margin-left: 4px; }
.editor-tools { height: 24px; padding-left: 1px; }
.editor-tools .sep { width: 7px; margin-left: 6px; }
.letter { font: bold 18px/22px "Liberation Serif", serif; }
.key { width: 15px; height: 15px; background: #ffdd8c; border: 1px solid #000; font: bold 9px/13px var(--arial); }

.modes { display: flex; align-items: flex-end; height: 27px; padding-left: 7px; background: #afafaf; border-bottom: 1px solid #6d6d6d; font: bold 12px/22px var(--arial); flex: none; }
.mode { width: 113px; height: 20px; background: var(--face); color: #555; text-align: left; padding-left: 7px; }
.mode.active { height: 21px; margin-bottom: -1px; width: 112px; padding-left: 0; background: #fff; color: #00f; border-right: 1px solid var(--line); }

.workspace { flex: 1; display: flex; min-height: 0; border-top: 4px solid #fff; }
.sidebar { width: 230px; display: flex; flex-direction: column; background: var(--panel); border: solid var(--line); border-width: 0 1px 1px; flex: none; }
.side-title { height: 22px; display: flex; align-items: center; justify-content: space-between; padding: 0 10px 0 4px; background: #a9a9a9; color: #fff; font-weight: bold; flex: none; }
.side-title svg { width: 6px; height: 11px; }
.section-head { height: 22px; display: flex; background: linear-gradient(#f0f0f0, #d6d6d6); border-bottom: 1px solid var(--line); font: bold 12px/22px var(--arial); flex: none; }
.section-head button { width: 23px; border-right: 1px solid var(--line); display: flex; align-items: center; justify-content: center; }
.section-head button svg { width: 12px; height: 8px; }
.section-head h3 { padding-left: 4px; }
.section-head.second { height: 24px; border-top: 2px solid #808080; }

.diagrams, .tree { background: repeating-linear-gradient(transparent 0 18px, #fff 18px 19px); }
.diagrams { flex: 1 1 0; min-height: 0; margin-left: 3px; }
.diagrams li, .tree li { display: flex; height: 19px; padding-bottom: 1px; line-height: 20px; white-space: nowrap; }
.diagrams li { gap: 3px; }
.diagrams span { height: 18px; padding: 0 3px 0 1px; }
.picked { background: var(--pick); }

.tree-pane { flex: 1 1 2px; min-height: 0; display: grid; grid-template: 1fr 20px / 1fr 21px; }
.tree-view { overflow: hidden; margin-left: 3px; }
.tree { margin-top: -16px; }
.tree i { width: 19px; height: 19px; flex: none; }
.guide { background: repeating-linear-gradient(#888 0 1px, transparent 1px 2px) 8px 0 / 1px 100% no-repeat; }
.tee { background: repeating-linear-gradient(#888 0 1px, transparent 1px 2px) 8px 0 / 1px 100% no-repeat, repeating-linear-gradient(90deg, #888 0 1px, transparent 1px 2px) 8px 9px / 11px 1px no-repeat; }
.tee.last { background-size: 1px 10px, 11px 1px; }
.twist { background: repeating-linear-gradient(90deg, #888 0 1px, transparent 1px 2px) 15px 9px / 4px 1px no-repeat; }
.twist::before { content: ""; display: block; width: 0; margin: 8px 0 0 3px; border: solid transparent; border-width: 4px 4px 0; border-top-color: #000; }
.tree .group { font-weight: bold; font-size: 13px; }
.tree .group svg { margin: 1px 4px 0 0; }
.chip { width: 13px; height: 18px; margin-right: 3px; background: #ffdd8c; text-align: center; font: bold 8px/16px var(--arial); overflow: hidden; flex: none; }
.chip.fn { line-height: 12px; }
.chip.net { line-height: 22px; background: linear-gradient(#333 0 0) 3px 4px / 9px 1px no-repeat, linear-gradient(#333 0 0) 6px 2px / 1px 5px no-repeat, #ffdd8c; }
.tree span { height: 18px; padding-left: 1px; }
.tree .group span { padding-left: 0; }

.vscroll { display: flex; flex-direction: column; padding: 1px; background: var(--panel); }
.vscroll button, .hscroll button { width: 19px; height: 18px; border: 1px solid #999; display: flex; align-items: center; justify-content: center; flex: none; }
.vscroll button svg, .hscroll button svg { width: 8px; height: 8px; }
.track { flex: 1; display: flex; }
.thumb { border: 1px solid #999; width: 19px; background: repeating-linear-gradient(#bbb 0 1px, transparent 1px 2px) center / 7px 8px no-repeat; }
.tree-pane .vscroll { border-left: 1px solid #fff; padding: 1px 0; }
.tree-track { padding: 35px 0 223px; }
.stage-track { padding: 2px 0 184px; }
.hscroll { display: flex; padding: 1px; border-top: 1px solid #fff; }
.hscroll button { width: 18px; }
.hscroll .thumb { width: 87px; height: 18px; margin-left: 2px; background: repeating-linear-gradient(90deg, #bbb 0 1px, transparent 1px 2px) center / 8px 7px no-repeat; }

.editor { flex: 1; min-width: 0; display: flex; flex-direction: column; margin-left: 4px; border-left: 1px solid var(--line); }
.editor-title { height: 22px; padding-left: 5px; border-top: 1px solid var(--line); background: #2d344d; color: #fff; font: bold 12px/20px var(--ui); flex: none; }
.doc-tabs { height: 32px; padding-top: 3px; background: #afafaf; border-bottom: 1px solid #6d6d6d; flex: none; }
.doc-tab { width: 144px; height: 29px; display: flex; align-items: center; gap: 4px; padding: 0 0 2px 9px; background: #fff; border-top: 4px solid #ff8000; border-right: 1px solid #808080; color: #f00; white-space: nowrap; }
.doc-tab button svg { width: 10px; height: 10px; }

.stage { flex: 1; min-height: 0; display: flex; background: #a7a7a7; }
.paper { flex: 1; min-width: 0; margin: 0 49px; background: conic-gradient(at 1px 1px, #fff 75%, #000 0) 0 9px / 10px 10px; }
.diagram { width: 100%; height: 100%; }
.plate { fill: #fff; }
.low, .high { fill: none; stroke-width: 1; }
.low { stroke: #00f; }
.high { stroke: #f00; }
.block { fill: #ffdd8c; }
.tag { font: 10px var(--arial); }
.sym { font: 12px var(--ui); text-anchor: middle; }
.rule { stroke: #000; }

.sim { height: 59px; display: flex; align-items: center; padding: 4px 0 0 10px; background: var(--panel); border-top: 4px solid var(--face); border-bottom: 1px solid var(--line); flex: none; }
.fold { width: 23px; height: 20px; }
.fold svg { width: 8px; height: 6px; }
.lamp { width: 26px; margin: 0 8px 0 -9px; text-align: center; line-height: 16px; }
.lamp svg { width: 24px; height: 26px; margin-bottom: 4px; }
.cycle { margin: 0 1px 0 6px; }
.count { width: 80px; height: 22px; padding: 0 4px; border: 1px solid #aaadb3; background: var(--panel); color: #888; font: 12px/18px var(--ui); text-align: right; }
.unit { width: 60px; height: 22px; display: flex; align-items: center; border: 1px solid #aaadb3; background: #ccc; }
.unit select { appearance: none; width: 40px; height: 16px; margin: 0 6px 0 1px; padding: 0 2px; border: 0; background: #e6e6e6; color: #777; opacity: 1; font: 12px/16px var(--ui); }
.unit svg { width: 10px; height: 6px; }
.time { margin: 0 1px 0 6px; font: bold 13px/18px "DejaVu Sans Condensed", "DejaVu Sans", sans-serif; }

.status { height: 19px; display: flex; border-top: 1px solid #adadad; background: var(--face); font: 12px/20px var(--ui); flex: none; }
.message { flex: 1; padding-left: 3px; }
.cell { width: 19px; display: flex; align-items: center; justify-content: center; gap: 3px; border-left: 2px solid #aaadb3; }
.model { width: 107px; }
.zoom { width: 61px; justify-content: flex-start; padding-left: 2px; }
.spare { width: 50px; border-right: 1px solid #aaadb3; }
```
